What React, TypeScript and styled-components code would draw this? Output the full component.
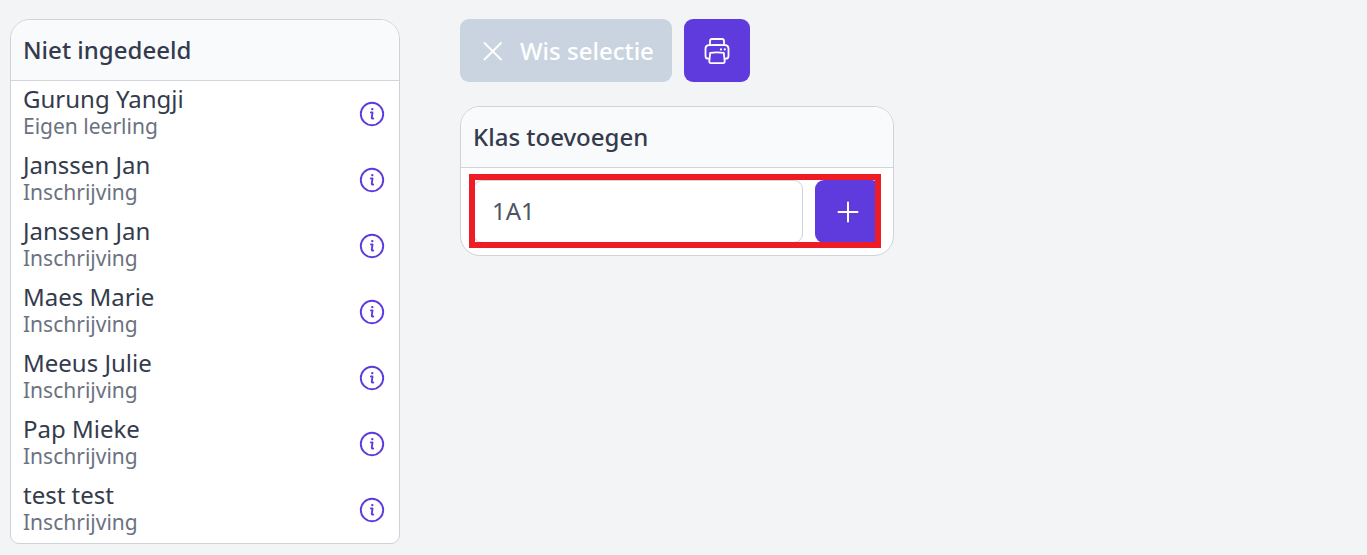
import React, { useState } from "react";
import styled, { createGlobalStyle } from "styled-components";

const GlobalStyle = createGlobalStyle`
  *, *::before, *::after { box-sizing: border-box; }
  body {
    margin: 0;
    background: #f2f4f6;
    color: #343b4c;
    font-family: "Noto Sans", sans-serif;
    font-size: 24px;
    line-height: 32px;
  }
  button, input { font: inherit; }
`;

const Page = styled.main`
  display: grid;
  grid-template-columns: minmax(0, 390px) minmax(0, 434px);
  column-gap: 60px;
  align-items: start;
  padding: 19px 10px 11px;
`;

const Column = styled.div`
  display: flex;
  flex-direction: column;
  gap: 24px;
`;

const Card = styled.section<{ $bottomRadius: number }>`
  background: #fff;
  border: 1px solid #d0d2d9;
  border-radius: ${(p) => `20px 20px ${p.$bottomRadius}px ${p.$bottomRadius}px`};
`;

const CardTitle = styled.h2`
  margin: 0;
  padding: 14px 12px;
  border-bottom: 1px solid #d0d5db;
  border-radius: 19px 19px 0 0;
  background: #f9fafc;
  font-size: 24px;
  font-weight: 500;
`;

const List = styled.ul`
  margin: 0;
  padding: 0;
  list-style: none;
`;

const Row = styled.li`
  display: flex;
  align-items: center;
  justify-content: space-between;
  height: 66px;
  padding: 0 14px 0 12px;
`;

const Student = styled.div`
  padding-bottom: 4px;
`;

const Name = styled.div`
  line-height: 28px;
`;

const Status = styled.div`
  color: #6b7280;
  font-size: 21px;
  line-height: 26px;
`;

const InfoButton = styled.button`
  display: flex;
  padding: 0;
  border: 0;
  background: none;
  color: #5f3adc;
  cursor: pointer;
`;

const Toolbar = styled.div`
  display: flex;
  gap: 12px;
`;

const Button = styled.button`
  display: flex;
  align-items: center;
  justify-content: center;
  flex: none;
  gap: 14px;
  height: 63px;
  min-width: 66px;
  padding: 0 18px;
  border: 0;
  border-radius: 9px;
  background: #5f3adc;
  color: #fff;
  font-weight: 500;
  cursor: pointer;

  &:disabled {
    background: #cad4e0;
    cursor: default;
  }
`;

const AddForm = styled.form`
  position: relative;
  display: flex;
  gap: 12px;
  padding: 12px;
`;

const ClassInput = styled.input`
  flex: 1;
  min-width: 0;
  height: 63px;
  padding: 0 18px 2px;
  border: 1px solid #d0d2d9;
  border-radius: 9px;
  background: #fff;
  color: #4b5563;
  outline: none;
`;

const Highlight = styled.div`
  position: absolute;
  inset: 6px 12px 7px 8px;
  border: 6px solid #ee1c25;
  pointer-events: none;
`;

const InfoIcon = () => (
  <svg width="26" height="26" viewBox="0 0 26 26" fill="none" stroke="currentColor" aria-hidden="true">
    <circle cx="13" cy="13" r="11.2" strokeWidth="1.9" />
    <path d="M11.9 11.4h1.6l-.7 5.3q0 1.1 1.4.8" strokeWidth="1.9" strokeLinecap="round" strokeLinejoin="round" />
    <circle cx="13.3" cy="8.1" r="1.2" fill="currentColor" stroke="none" />
  </svg>
);

const CrossIcon = () => (
  <svg width="28" height="28" viewBox="0 0 28 28" fill="none" stroke="currentColor" strokeWidth="1.8" strokeLinecap="round" aria-hidden="true">
    <path d="M6.5 6L23 22.5M23 6L6.5 22.5" />
  </svg>
);

const PrinterIcon = () => (
  <svg width="28" height="28" viewBox="0 0 28 28" fill="none" stroke="currentColor" strokeWidth="1.8" strokeLinejoin="round" aria-hidden="true">
    <path d="M7 8V4q0-2 2-2h10q2 0 2 2v4" />
    <path d="M6.4 21.6H5.2q-2.7 0-2.7-2.7V11.6q0-3.2 3.4-3.4 8.1-.4 16.2 0 3.4.2 3.4 3.4v7.3q0 2.7-2.7 2.7h-1.2" />
    <path d="M7.2 15.8q6.8-.9 13.6 0l.9 8.4q.2 2-1.8 2H8.1q-2 0-1.8-2z" />
    <circle cx="18" cy="12.4" r="1.1" fill="currentColor" stroke="none" />
    <circle cx="21.8" cy="12.4" r="1.1" fill="currentColor" stroke="none" />
  </svg>
);

const PlusIcon = () => (
  <svg width="28" height="28" viewBox="0 0 28 28" fill="none" stroke="currentColor" strokeWidth="2" strokeLinecap="round" aria-hidden="true">
    <path d="M14 4.5v19M4.5 14h19" />
  </svg>
);

const students = [
  { name: "Gurung Yangji", status: "Eigen leerling" },
  { name: "Janssen Jan", status: "Inschrijving" },
  { name: "Janssen Jan", status: "Inschrijving" },
  { name: "Maes Marie", status: "Inschrijving" },
  { name: "Meeus Julie", status: "Inschrijving" },
  { name: "Pap Mieke", status: "Inschrijving" },
  { name: "test test", status: "Inschrijving" },
];

export default function App() {
  const [className, setClassName] = useState("1A1");

  return (
    <>
      <GlobalStyle />
      <Page>
        <Card $bottomRadius={9}>
          <CardTitle>Niet ingedeeld</CardTitle>
          <List>
            {students.map((student, index) => (
              <Row key={index}>
                <Student>
                  <Name>{student.name}</Name>
                  <Status>{student.status}</Status>
                </Student>
                <InfoButton type="button" aria-label={`Info ${student.name}`}>
                  <InfoIcon />
                </InfoButton>
              </Row>
            ))}
          </List>
        </Card>
        <Column>
          <Toolbar>
            <Button type="button" disabled>
              <CrossIcon />
              Wis selectie
            </Button>
            <Button type="button" aria-label="Afdrukken">
              <PrinterIcon />
            </Button>
          </Toolbar>
          <Card $bottomRadius={20}>
            <CardTitle>Klas toevoegen</CardTitle>
            <AddForm onSubmit={(event) => event.preventDefault()}>
              <ClassInput
                aria-label="Klas"
                value={className}
                onChange={(event) => setClassName(event.target.value)}
              />
              <Button type="submit" aria-label="Toevoegen">
                <PlusIcon />
              </Button>
              <Highlight />
            </AddForm>
          </Card>
        </Column>
      </Page>
    </>
  );
}
